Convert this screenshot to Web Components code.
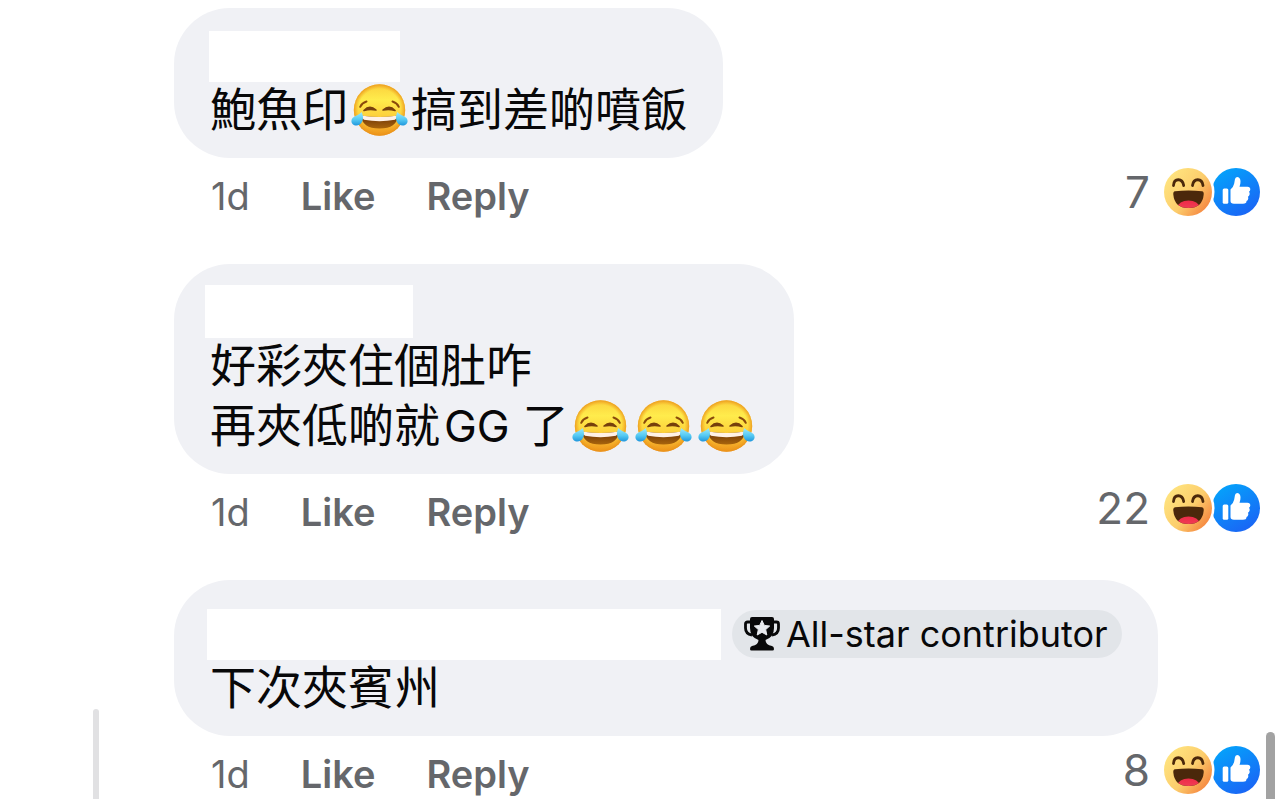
<!DOCTYPE html>
<html lang="zh-HK">
<head>
<meta charset="utf-8">
<meta name="viewport" content="width=device-width, initial-scale=1">
<title>Comments</title>
<style>
  html, body { margin: 0; height: 100%; }
  body { background: #fff; overflow: hidden; font-family: Inter, "Noto Sans CJK TC", sans-serif; color: #080809; text-autospace: no-autospace; }
</style>
</head>
<body>
<comment-feed>
  <comment-item count="7">
    <redacted-name slot="name" style="--w:191px;--h:51px;--shift:-1px"></redacted-name>
    <comment-line>鮑魚印<joy-emoji></joy-emoji>搞到差啲噴飯</comment-line>
  </comment-item>
  <comment-item count="22">
    <redacted-name slot="name" style="--w:208px;--h:53px;--shift:-5px"></redacted-name>
    <comment-line>好彩夾住個肚咋</comment-line>
    <comment-line>再夾低啲就<latin-run>GG</latin-run> 了<joy-emoji></joy-emoji><joy-emoji></joy-emoji><joy-emoji></joy-emoji></comment-line>
  </comment-item>
  <comment-item count="8" threaded>
    <redacted-name slot="name" style="--w:514px;--h:51px;--shift:-3px"></redacted-name>
    <contributor-badge slot="name">All-star contributor</contributor-badge>
    <comment-line>下次夾賓州</comment-line>
  </comment-item>
</comment-feed>
<scroll-thumb></scroll-thumb>

<script>
const define = (name, html, setup) => {
  const tpl = document.createElement('template');
  tpl.innerHTML = html;
  customElements.define(name, class extends HTMLElement {
    constructor() {
      super();
      this.attachShadow({ mode: 'open' }).append(tpl.content.cloneNode(true));
    }
    connectedCallback() { if (setup) setup(this, this.shadowRoot); }
  });
};

define('comment-feed', `
<style>
  :host { display: flex; flex-direction: column; gap: 48px; padding: 8px 24px 0 0; height: 100%; box-sizing: border-box; overflow: hidden; }
  ::slotted(*) { flex: none; }
</style>
<slot></slot>`);

define('comment-item', `
<style>
  :host { display: grid; grid-template-columns: 174px 1fr; }
  .rail { display: none; margin: 129px 0 -48px 93px; width: 6px; border-radius: 3px 3px 0 0; background: #e1e1e3; }
  :host([threaded]) .rail { display: block; }
  .body { grid-column: 2; }
  .bubble { display: flex; flex-direction: column; gap: 4px; width: fit-content; box-sizing: border-box; padding: 20px 36px; border-radius: 56px; background: #f0f1f5; }
  .name { display: flex; align-items: flex-end; gap: 14px; min-height: 54px; margin-bottom: -4px; }
  :host([threaded]) .name { min-height: 60px; }
  footer { display: flex; align-items: center; margin-top: 10px; height: 48px; color: #65676b; font-size: 38px; }
  .actions { display: flex; align-items: center; gap: 51px; padding: 8px 0 0 37px; line-height: 48px; }
  button { all: unset; font-weight: 600; cursor: pointer; }
  .count { margin-left: auto; margin-right: 14px; font-size: 44px; line-height: 48px; }
</style>
<div class="rail"></div>
<article class="body">
  <div class="bubble">
    <div class="name"><slot name="name"></slot></div>
    <slot></slot>
  </div>
  <footer>
    <div class="actions"><time>1d</time><button type="button">Like</button><button type="button">Reply</button></div>
    <span class="count"></span>
    <reaction-pair></reaction-pair>
  </footer>
</article>`, (el, root) => { root.querySelector('.count').textContent = el.getAttribute('count'); });

define('redacted-name', `
<style>:host { display: block; width: var(--w); height: var(--h); margin-left: var(--shift); background: #fff; }</style>`);

define('comment-line', `
<style>:host { display: block; font-size: 46px; line-height: 54px; height: 56px; white-space: nowrap; }</style>
<slot></slot>`);

define('latin-run', `<style>:host { display: inline; font-size: 44px; margin-left: 4px; }</style><slot></slot>`);

define('contributor-badge', `
<style>
  :host { display: flex; align-items: center; gap: 6px; height: 48px; margin: 0 0 2px -3px; padding: 0 14px 0 12px; box-sizing: border-box; border-radius: 24px; background: #e2e5e9; font-size: 36px; white-space: nowrap; }
  svg { width: 36px; height: 34px; flex: none; }
</style>
<svg viewBox="0 0 36 34" aria-hidden="true">
  <path d="M7 5H3.500Q1.500 5 1.500 7V11Q1.500 17 8 18M29 5H32.500Q34.500 5 34.500 7V11Q34.500 17 28 18" fill="none" stroke="#080809" stroke-width="2.800"/>
  <path d="M8 0H28Q30 0 30 2V11Q30 20 21.500 23Q21.500 28 28 29Q30 29.500 30 32Q30 33.500 28.500 33.500H7.500Q6 33.500 6 32Q6 29.500 8 29Q14.500 28 14.500 23Q6 20 6 11V2Q6 0 8 0Z" fill="#080809"/>
  <path d="M18 3.500L20.300 8.400L25.700 9L21.700 12.600L22.800 18L18 15.300L13.200 18L14.300 12.600L10.300 9L15.700 8.400Z" fill="#e8eaee" stroke="#e8eaee" stroke-linejoin="round"/>
</svg>
<span><slot></slot></span>`);

define('joy-emoji', `
<style>
  :host { display: inline-block; width: 57px; height: 52px; margin: 0 3px 6px; vertical-align: middle; line-height: 0; }
  svg { width: 57px; height: 52px; }
</style>
<svg viewBox="0 0 57 52" role="img" aria-label="face with tears of joy">
  <defs>
    <linearGradient id="f" x2="0" y2="1"><stop stop-color="#fbd03c"/><stop offset=".3" stop-color="#ffec4c"/><stop offset=".6" stop-color="#fdd23c"/><stop offset="1" stop-color="#ee941c"/></linearGradient>
    <radialGradient id="e"><stop offset=".82" stop-color="#f0a01c" stop-opacity="0"/><stop offset="1" stop-color="#e98f18" stop-opacity=".8"/></radialGradient>
    <linearGradient id="m" x2="0" y2="1"><stop stop-color="#6b3208"/><stop offset="1" stop-color="#a8640c"/></linearGradient>
    <linearGradient id="t" x2="0" y2="1"><stop stop-color="#9de9fc"/><stop offset=".55" stop-color="#56caf3"/><stop offset="1" stop-color="#2097dd"/></linearGradient>
  </defs>
  <circle cx="28.500" cy="26" r="25.700" fill="url(#f)"/>
  <circle cx="28.500" cy="26" r="25.700" fill="url(#e)"/>
  <path d="M9.200 22.800Q11 18.800 15.500 17.500M47.800 22.800Q46 18.800 41.500 17.500" fill="none" stroke="#8a4a0b" stroke-width="2" stroke-linecap="round"/>
  <path d="M13 26.500Q18.500 20.500 25 26Q19 24.500 13 26.500ZM44 26.500Q38.500 20.500 32 26Q38 24.500 44 26.500Z" fill="#76400c" stroke="#76400c" stroke-width="1.600" stroke-linejoin="round"/>
  <path d="M10 31.500Q28.500 34.500 47 31.500Q46 44.500 28.500 44.500Q11 44.500 10 31.500Z" fill="url(#m)"/>
  <path d="M10.500 31.500Q28.500 34.500 46.500 31.500Q46 34.500 44 35.800Q28.500 38.500 13 35.800Q11 34.500 10.500 31.500Z" fill="#fff1e6"/>
  <path d="M10.500 28C13.500 33 12 41.500 5.500 41.500C1 41.500 -1 37 1.500 34C4 31.500 8.500 31 10.500 28Z" fill="url(#t)"/>
  <path d="M46.500 28C43.500 33 45 41.500 51.500 41.500C56 41.500 58 37 55.500 34C53 31.500 48.500 31 46.500 28Z" fill="url(#t)"/>
</svg>`);

define('reaction-pair', `
<style>
  :host { display: flex; flex: none; }
  svg { width: 96px; height: 48px; overflow: visible; }
</style>
<svg viewBox="0 0 96 48" role="img" aria-label="Haha and Like">
  <defs>
    <linearGradient id="h" x1=".05" y1=".15" x2=".95" y2=".85"><stop stop-color="#ffe580"/><stop offset=".55" stop-color="#fccd6c"/><stop offset="1" stop-color="#f5813c"/></linearGradient>
    <linearGradient id="l" x1=".2" y1="0" x2=".8" y2="1"><stop stop-color="#04a4fb"/><stop offset="1" stop-color="#1b62f5"/></linearGradient>
    <linearGradient id="g" x2="0" y2="1"><stop stop-color="#ee2a49"/><stop offset="1" stop-color="#f14d5c"/></linearGradient>
    <clipPath id="c"><path d="M11 23.200Q24.500 22 38 23.200Q40 23.500 39.700 26.500Q38.500 40 24.500 40Q10.500 40 9.300 26.500Q9 23.500 11 23.200Z"/></clipPath>
  </defs>
  <circle cx="72" cy="24" r="24" fill="url(#l)"/>
  <rect x="58.700" y="20.500" width="5.600" height="15.300" rx="1.500" fill="#fff"/>
  <path d="M66.500 21.500Q69.500 19 70.200 15.500L71 11Q71.500 9 73.500 9Q76.500 9.500 76.500 13.500Q76.500 16.500 75.500 18.800H83.500Q86.300 18.800 86.300 21.300Q86.300 23 85 23.800Q86 25 85.600 26.500Q85.300 28 84 28.700Q84.600 30.300 84 31.500Q83.500 32.500 82.500 33Q82.700 35.800 79 35.800H70Q66.500 35.800 66.500 33Z" fill="#fff"/>
  <circle cx="24" cy="24" r="26.500" fill="#fff"/>
  <circle cx="24" cy="24" r="24" fill="url(#h)"/>
  <path d="M9.500 17.500C10 9.800 18.500 9.800 19.700 17.500M28.500 17.500C29.500 9.800 38 9.800 39 17.500" fill="none" stroke="#4b280b" stroke-width="2.800" stroke-linecap="round"/>
  <path d="M11 23.200Q24.500 22 38 23.200Q40 23.500 39.700 26.500Q38.500 40 24.500 40Q10.500 40 9.300 26.500Q9 23.500 11 23.200Z" fill="#4b280b"/>
  <ellipse cx="24.500" cy="39.500" rx="11" ry="7" fill="url(#g)" clip-path="url(#c)"/>
</svg>`);

define('scroll-thumb', `
<style>:host { position: absolute; right: 9px; top: 732px; bottom: 0; width: 9px; border-radius: 5px 5px 0 0; background: #a2a2a2; }</style>`);
</script>
</body>
</html>
